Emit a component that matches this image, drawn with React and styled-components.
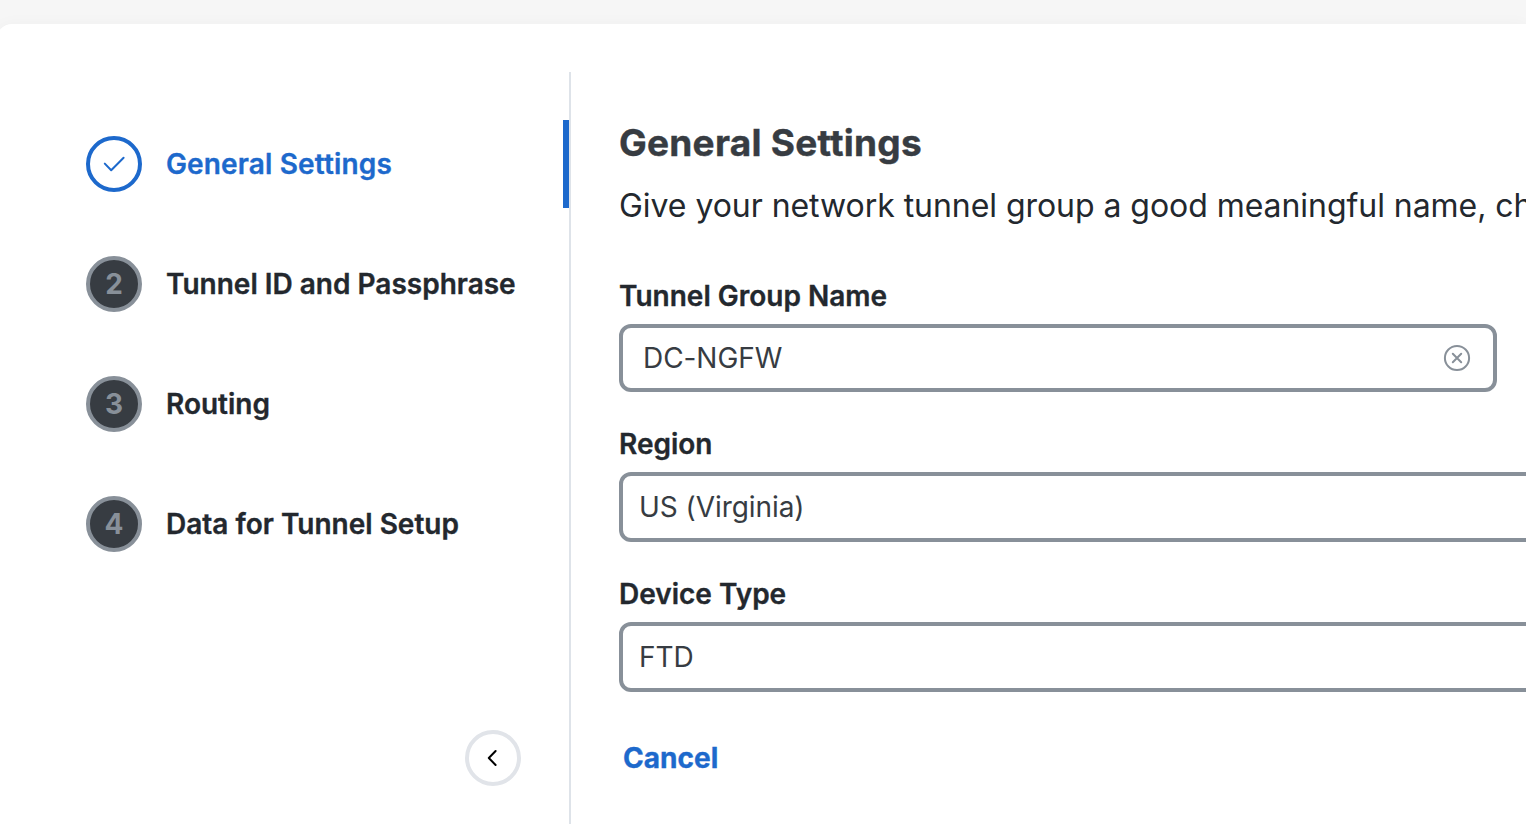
import React from "react";
import styled, { createGlobalStyle } from "styled-components";

const GlobalStyle = createGlobalStyle`
  * { box-sizing: border-box; }
  html, body { margin: 0; overflow: hidden; }
  body {
    font-family: Inter, "Liberation Sans", sans-serif;
    font-size: 28px;
    color: #23282e;
    background: #f6f6f6;
  }
`;

const Page = styled.div`
  width: 100%;
  height: 834px;
  padding-top: 24px;
  overflow: hidden;
  background: #f6f6f6;
`;

const Card = styled.main`
  display: flex;
  width: calc(100% + 4px);
  height: 810px;
  margin-left: -4px;
  padding: 48px 0 10px 4px;
  background: #fff;
  border-radius: 16px 0 0 0;
  box-shadow: 0 0 16px rgba(0, 0, 0, 0.03);
`;

const Sidebar = styled.aside`
  display: flex;
  flex-direction: column;
  flex: none;
  width: 571px;
  height: 752px;
  padding-top: 48px;
  border-right: 2px solid #dee3e9;
`;

const StepList = styled.ol`
  display: flex;
  flex-direction: column;
  gap: 32px;
  margin: 0;
  padding: 0;
  list-style: none;
`;

const Step = styled.li`
  display: flex;
  align-items: center;
  gap: 24px;
  height: 88px;
  padding-left: 86px;
  border-right: 6px solid ${(p) => (p.$active ? "#1d69cc" : "transparent")};
  color: ${(p) => (p.$active ? "#1d69cc" : "#23282e")};
`;

const StepBadge = styled.span`
  display: flex;
  align-items: center;
  justify-content: center;
  flex: none;
  width: 56px;
  height: 56px;
  border: 4px solid ${(p) => (p.$active ? "#1d69cc" : "#889099")};
  border-radius: 50%;
  background: ${(p) => (p.$active ? "#fff" : "#373c42")};
  color: ${(p) => (p.$active ? "#1d69cc" : "#889099")};
  font-weight: 700;
`;

const StepLabel = styled.span`
  font-weight: 600;
  line-height: 40px;
  white-space: nowrap;
  letter-spacing: ${(p) => (p.$active ? "0.15px" : "0")};
  -webkit-text-stroke: 0.35px currentColor;
`;

const CollapseButton = styled.button`
  display: flex;
  align-items: center;
  justify-content: center;
  width: 56px;
  height: 56px;
  margin: auto 48px 38px auto;
  padding: 0;
  border: 4px solid #e1e4e9;
  border-radius: 50%;
  background: #fff;
`;

const Content = styled.section`
  flex: 1;
  min-width: 0;
  padding: 47px 0 0 48px;
  overflow: hidden;
`;

const Title = styled.h1`
  margin: 0;
  font-size: 37px;
  font-weight: 700;
  line-height: 48px;
  letter-spacing: 0.25px;
  color: #373c42;
  -webkit-text-stroke: 0.4px currentColor;
`;

const Description = styled.p`
  margin: 15px 0 0;
  font-size: 32px;
  line-height: 48px;
  letter-spacing: -0.05px;
  white-space: nowrap;
`;

const Field = styled.div`
  display: flex;
  flex-direction: column;
  gap: 8px;
  margin-top: ${(p) => p.$top}px;
`;

const Label = styled.label`
  font-weight: 600;
  line-height: 40px;
  -webkit-text-stroke: 0.35px currentColor;
`;

const Control = styled.div`
  display: flex;
  align-items: center;
  justify-content: space-between;
  width: ${(p) => (p.$select ? "1100px" : "878px")};
  height: ${(p) => (p.$select ? 70 : 68)}px;
  padding: 0 22px 0 ${(p) => (p.$select ? 16 : 20)}px;
  border: 4px solid #889099;
  border-radius: 12px;
  background: #fff;
  color: #373c42;
  letter-spacing: -0.06px;
`;

const CancelButton = styled.button`
  display: block;
  margin: 46px 0 0 4px;
  padding: 0;
  border: 0;
  background: none;
  color: #1d69cc;
  font: inherit;
  font-weight: 700;
  line-height: 40px;
  letter-spacing: 0.05px;
  -webkit-text-stroke: 0.35px currentColor;
`;

const CheckIcon = () => (
  <svg width="24" height="20" viewBox="0 0 24 20" fill="none" stroke="currentColor" strokeWidth="2" strokeLinecap="round" strokeLinejoin="round">
    <path d="M2.8 9.6l6.4 6.6L21.6 3.7" />
  </svg>
);

const ChevronIcon = () => (
  <svg width="12" height="18" viewBox="0 0 12 18" fill="none" stroke="#000" strokeWidth="2" strokeLinecap="round" strokeLinejoin="round">
    <path d="M8.6 2L1.8 9l6.8 7" />
  </svg>
);

const ClearIcon = () => (
  <svg width="28" height="28" viewBox="0 0 28 28" fill="none" stroke="#889099" strokeWidth="2" strokeLinecap="round">
    <circle cx="14" cy="14" r="12.1" />
    <path d="M9.8 9.8l8.4 8.4M18.2 9.8l-8.4 8.4" />
  </svg>
);

const steps = ["General Settings", "Tunnel ID and Passphrase", "Routing", "Data for Tunnel Setup"];

export default function App() {
  return (
    <>
      <GlobalStyle />
      <Page>
        <Card>
          <Sidebar>
            <StepList>
              {steps.map((name, i) => (
                <Step key={name} $active={i === 0}>
                  <StepBadge $active={i === 0}>{i === 0 ? <CheckIcon /> : i + 1}</StepBadge>
                  <StepLabel $active={i === 0}>{name}</StepLabel>
                </Step>
              ))}
            </StepList>
            <CollapseButton aria-label="Collapse steps">
              <ChevronIcon />
            </CollapseButton>
          </Sidebar>
          <Content>
            <Title>General Settings</Title>
            <Description>Give your network tunnel group a good meaningful name, ch</Description>
            <Field $top={46}>
              <Label>Tunnel Group Name</Label>
              <Control>
                DC-NGFW
                <ClearIcon />
              </Control>
            </Field>
            <Field $top={32}>
              <Label>Region</Label>
              <Control $select>US (Virginia)</Control>
            </Field>
            <Field $top={32}>
              <Label>Device Type</Label>
              <Control $select>FTD</Control>
            </Field>
            <CancelButton>Cancel</CancelButton>
          </Content>
        </Card>
      </Page>
    </>
  );
}
